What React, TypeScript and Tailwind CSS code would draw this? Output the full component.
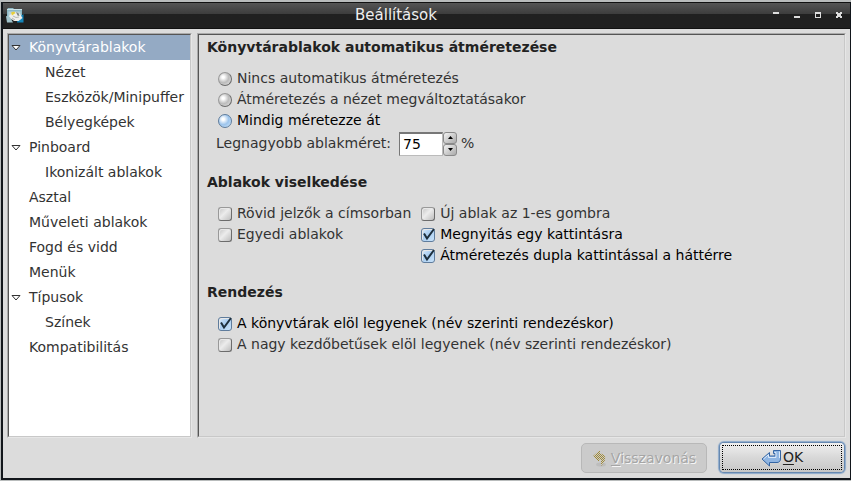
import { useState } from 'react';
import type { ReactNode } from 'react';

type TreeItem = { label: string; level: 0 | 1; open?: boolean };

const tree: TreeItem[] = [
  { label: 'Könyvtárablakok', level: 0, open: true },
  { label: 'Nézet', level: 1 },
  { label: 'Eszközök/Minipuffer', level: 1 },
  { label: 'Bélyegképek', level: 1 },
  { label: 'Pinboard', level: 0, open: true },
  { label: 'Ikonizált ablakok', level: 1 },
  { label: 'Asztal', level: 0 },
  { label: 'Műveleti ablakok', level: 0 },
  { label: 'Fogd és vidd', level: 0 },
  { label: 'Menük', level: 0 },
  { label: 'Típusok', level: 0, open: true },
  { label: 'Színek', level: 1 },
  { label: 'Kompatibilitás', level: 0 },
];

const resizeModes = [
  'Nincs automatikus átméretezés',
  'Átméretezés a nézet megváltoztatásakor',
  'Mindig méretezze át',
];

const sunken =
  'border border-t-[#aaa] border-r-[#e6e6e6] border-b-[#e6e6e6] border-l-[#aaa]';
const sunkenInner =
  'border border-t-[#555] border-r-[#c8c8c8] border-b-[#c8c8c8] border-l-[#555]';

function AppIcon() {
  return (
    <svg width="18" height="17" viewBox="0 0 18 17" aria-hidden="true">
      <path d="M1 2.500L2 1h5l1 1h8v10H1z" fill="#8db9c6" />
      <path d="M1 2.500h15" stroke="#c9e2e8" />
      <path d="M12 11l5.500-4v8.500H11z" fill="#1484b8" />
      <path d="M2.500 4.500h12v8h-12z" fill="#b9d3da" />
      <path d="M0 9l4 1 3 5.500H1z" fill="#a2c4cc" />
      <path d="M3 9l3-3 5-1 3 2 2.500 4-4 3H8L4.500 11z" fill="#efefec" />
      <path d="M5 5.500l3-1 1.500 1.500L6 8.500z" fill="#e8cf3a" />
      <path d="M10 5l2.500 1 1 3-2-.5z" fill="#7d8684" />
      <path d="M7 9l3 1.500 3-.5M6 11l3 2" fill="none" stroke="#b9bab5" />
    </svg>
  );
}

function Arrow() {
  return (
    <svg width="10" height="6" viewBox="0 0 10 6" className="shrink-0" aria-hidden="true">
      <path d="M1 .5h8L5 5z" fill="#fff" stroke="#333" />
    </svg>
  );
}

function UndoIcon() {
  return (
    <svg width="15" height="17" viewBox="0 0 15 17" aria-hidden="true">
      <defs>
        <pattern id="stipple" width="2" height="2" patternUnits="userSpaceOnUse">
          <rect width="2" height="2" fill="#cbcbcb" />
          <rect width="1" height="1" fill="#a08a35" />
          <rect x="1" y="1" width="1" height="1" fill="#a08a35" />
        </pattern>
      </defs>
      <ellipse cx="9" cy="14.500" rx="5" ry="2" fill="#bdbdbd" />
      <path d="M1 6l7-6v3.500c4 .5 6 3 5 6.500-.5 2-2 4-4 6V9.500H7V12z" fill="url(#stipple)" />
    </svg>
  );
}

function OkIcon() {
  return (
    <svg width="21" height="18" viewBox="0 0 21 18" aria-hidden="true">
      <path
        d="M1 10l7.500-6.500V7h5.500V4.500h-1.500v-3H19.500V10c0 2-1.500 3.500-3.500 3.500H8.500V17z"
        fill="#8fb5e2"
        stroke="#3465a4"
        strokeLinejoin="round"
      />
      <path d="M2.500 10l5-4.300V8.500H15V3.500h-1.500M18.500 2.500V9" fill="none" stroke="#dceafa" />
    </svg>
  );
}

function Tick({ label, checked: initial = false }: { label: string; checked?: boolean }) {
  const [checked, setChecked] = useState(initial);
  return (
    <label className={`flex h-[21px] items-center gap-[5px] pl-[2px] ${checked ? 'text-black' : 'text-[#333]'}`}>
      <span className="relative size-[14px] shrink-0">
        <input
          type="checkbox"
          checked={checked}
          onChange={(e) => setChecked(e.target.checked)}
          className="block size-[14px] appearance-none rounded-[3px] border border-[#999] border-r-[#6c6c6c] border-b-[#6c6c6c] bg-linear-to-br from-[#c4c4c4] via-[#ececec] via-45% to-[#bdbdbd] shadow-[inset_1px_1px_0_#e8e8e8] checked:border-[#5f7c9c] checked:from-[#dcecfb] checked:via-[#a9cdf0] checked:to-[#c9e3fa]"
        />
        {checked && (
          <svg className="pointer-events-none absolute inset-0" width="14" height="14" viewBox="0 0 14 14" aria-hidden="true">
            <path d="M3 5.500l3 5L13 1" fill="none" stroke="#1d2f3d" strokeWidth="2" />
          </svg>
        )}
      </span>
      {label}
    </label>
  );
}

function Section({ title, children }: { title: string; children: ReactNode }) {
  return (
    <section>
      <h2 className="mb-[10px] font-bold leading-[21px] text-[#222]">{title}</h2>
      <div className="pl-[9px]">{children}</div>
    </section>
  );
}

export default function App() {
  const [selected, setSelected] = useState(0);
  const [mode, setMode] = useState(2);
  const [size, setSize] = useState(75);

  return (
    <div className="flex min-h-screen flex-col bg-[#b9bcbc] pt-[2px] pb-px pl-px font-['DejaVu_Sans',sans-serif] text-[14px] leading-[21px] text-[#333]">
      <div className="flex flex-1 flex-col border-r border-b-2 border-l-2 border-[#12161b] bg-[#dcdcdc]">
        <header className="flex h-[27px] items-center border-y border-t-[#111] border-b-[#111] bg-linear-to-b from-[#555] from-0% via-[#3c3c3c] via-45% to-[#202020] to-45% pr-[3px] pl-[3px]">
          <AppIcon />
          <h1 className="flex-1 text-center text-[15px] text-[#eee]">Beállítások</h1>
          <div className="flex gap-[5px]">
            <button aria-label="Felgördítés" className="flex size-4 justify-center pt-[4px]">
              <span className="h-[2px] w-[6px] bg-[#ddd]" />
            </button>
            <button aria-label="Kis méret" className="flex size-4 justify-center pt-[8px]">
              <span className="h-[2px] w-[6px] bg-[#ddd]" />
            </button>
            <button aria-label="Teljes méret" className="flex size-4 justify-center pt-[4px]">
              <span className="size-[6px] border border-t-2 border-[#ddd]" />
            </button>
            <button aria-label="Bezárás" className="flex size-4 justify-center pt-[4px]">
              <svg width="6" height="6" viewBox="0 0 6 6" aria-hidden="true">
                <path d="M0 0h2v1h2V0h2v2H5v2h1v2H4V5H2v1H0V4h1V2H0z" fill="#ddd" />
              </svg>
            </button>
          </div>
        </header>

        <div className="flex flex-1 gap-[5px] px-1 pt-1">
          <nav className={`flex w-[185px] shrink-0 ${sunken}`}>
            <ul className={`flex-1 bg-white ${sunkenInner}`}>
              {tree.map((item, i) => (
                <li key={item.label}>
                  <button
                    onClick={() => setSelected(i)}
                    className={`flex h-[25px] w-full items-center whitespace-nowrap pl-[2px] text-left ${
                      i === selected ? 'bg-[#94aac4] text-white' : ''
                    }`}
                  >
                    <span className={item.level === 1 ? 'w-[34px] shrink-0' : 'w-[18px] shrink-0'}>
                      {item.open && <Arrow />}
                    </span>
                    {item.label}
                  </button>
                </li>
              ))}
            </ul>
          </nav>

          <main className={`flex flex-1 ${sunken}`}>
            <div className={`flex flex-1 flex-col gap-4 pt-[2px] pl-2 ${sunkenInner}`}>
              <Section title="Könyvtárablakok automatikus átméretezése">
                {resizeModes.map((label, i) => (
                  <label
                    key={label}
                    className={`flex h-[21px] items-center gap-[5px] pl-[2px] ${i === mode ? 'text-black' : 'text-[#333]'}`}
                  >
                    <input
                      type="radio"
                      name="resize"
                      checked={i === mode}
                      onChange={() => setMode(i)}
                      className="size-[14px] appearance-none rounded-full border border-[#999] border-r-[#6c6c6c] border-b-[#6c6c6c] bg-radial-[at_35%_35%] from-white from-10% via-[#bcbcbc] via-50% to-[#e8e8e8] checked:border-[#5f7c9c] checked:from-white checked:via-[#9cc4ec] checked:to-[#d4eafc]"
                    />
                    {label}
                  </label>
                ))}
                <div className="flex h-[25px] items-center">
                  <label htmlFor="max-size">Legnagyobb ablakméret:</label>
                  <input
                    id="max-size"
                    value={size}
                    onChange={(e) => setSize(Number(e.target.value) || 0)}
                    className="ml-2 h-[24px] w-[44px] border border-t-2 border-[#bbb] border-t-[#777] border-l-[#777] bg-white px-[3px] text-black outline-none"
                  />
                  <div className="flex flex-col">
                    <button
                      aria-label="Növelés"
                      onClick={() => setSize(size + 1)}
                      className="flex h-[12px] w-[14px] items-center justify-center rounded-[3px] border border-[#8a8a8a] bg-linear-to-br from-[#f4f4f4] to-[#aaa]"
                    >
                      <svg width="5" height="3" viewBox="0 0 5 3" aria-hidden="true">
                        <path d="M2.500 0L5 3H0z" fill="#000" />
                      </svg>
                    </button>
                    <button
                      aria-label="Csökkentés"
                      onClick={() => setSize(size - 1)}
                      className="flex h-[12px] w-[14px] items-center justify-center rounded-[3px] border border-[#8a8a8a] bg-linear-to-br from-[#f4f4f4] to-[#aaa]"
                    >
                      <svg width="5" height="3" viewBox="0 0 5 3" aria-hidden="true">
                        <path d="M0 0h5L2.500 3z" fill="#000" />
                      </svg>
                    </button>
                  </div>
                  <span className="ml-1">%</span>
                </div>
              </Section>

              <Section title="Ablakok viselkedése">
                <div className="grid grid-cols-[max-content_max-content] gap-x-2">
                  <Tick label="Rövid jelzők a címsorban" />
                  <Tick label="Új ablak az 1-es gombra" />
                  <Tick label="Egyedi ablakok" />
                  <Tick label="Megnyitás egy kattintásra" checked />
                  <div className="col-start-2">
                    <Tick label="Átméretezés dupla kattintással a háttérre" checked />
                  </div>
                </div>
              </Section>

              <Section title="Rendezés">
                <Tick label="A könyvtárak elöl legyenek (név szerinti rendezéskor)" checked />
                <Tick label="A nagy kezdőbetűsek elöl legyenek (név szerinti rendezéskor)" />
              </Section>
            </div>
          </main>
        </div>

        <footer className="flex justify-end gap-[13px] px-[6px] pt-[5px] pb-[5px]">
          <button
            disabled
            className="flex h-[30px] w-[126px] items-center justify-center gap-1 rounded-[5px] border border-[#b8b8b8] bg-[#cbcbcb] text-[#a5a5a5] [text-shadow:1px_1px_0_#f5f5f5]"
          >
            <UndoIcon />
            <span>
              <u className="underline-offset-2">V</u>isszavonás
            </span>
          </button>
          <button className="h-[29px] w-[124px] rounded-[4px] bg-linear-to-b from-[#f0f0f0] from-0% via-[#d8d8d8] via-50% to-[#c6c6c6] p-[2px] text-[#222] shadow-[0_0_0_1px_#6688b0,0_0_1px_2px_#8ca9ca]">
            <span className="flex h-full items-center justify-center gap-px border border-dotted border-black">
              <OkIcon />
              <span>
                <u className="underline-offset-2">O</u>K
              </span>
            </span>
          </button>
        </footer>
      </div>
    </div>
  );
}
